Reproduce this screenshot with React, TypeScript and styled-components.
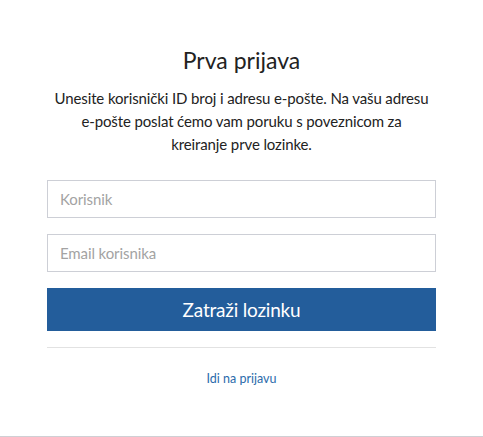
import React from "react";
import styled, { createGlobalStyle } from "styled-components";

const Global = createGlobalStyle`
  html, body { margin: 0; padding: 0; background: #fff; }
  body { font-family: Lato, "Noto Sans", sans-serif; color: #212529; }
  * { box-sizing: border-box; }
`;

const Page = styled.div`
  height: 437px;
  border-bottom: 1px solid #cfcfd4;
  display: flex;
  justify-content: center;
`;

const Card = styled.div`
  width: 389px;
  padding-top: 44px;
  display: flex;
  flex-direction: column;
`;

const Title = styled.h1`
  margin: 0;
  font-size: 23px;
  font-weight: 400;
  line-height: 32px;
  text-align: center;
  color: #222;
`;

const Intro = styled.p`
  margin: 11px -4px 0;
  font-size: 15px;
  letter-spacing: -0.12px;
  line-height: 23px;
  text-align: center;
  color: #222;
`;

const Input = styled.input<{ $mt: number }>`
  height: 38px;
  width: 100%;
  border: 1px solid #cdcfd6;
  padding: 0 12px;
  font-family: inherit;
  font-size: 15px;
  letter-spacing: -0.1px;
  color: #333;
  margin-top: ${(p) => p.$mt}px;
  outline: none;
  &::placeholder { color: #a3a3a3; }
`;

const Button = styled.button`
  margin-top: 16px;
  height: 43px;
  width: 100%;
  border: none;
  background: #235d9b;
  color: #fff;
  font-family: inherit;
  font-size: 19px;
  letter-spacing: -0.2px;
  cursor: pointer;
`;

const Divider = styled.hr`
  margin: 16px 0 0;
  border: none;
  border-top: 1px solid #e2e2e2;
`;

const Link = styled.a`
  margin-top: 23px;
  align-self: center;
  font-size: 12.5px;
  line-height: 16px;
  color: #2b6bab;
  text-decoration: none;
`;

export default function App() {
  return (
    <>
      <Global />
      <Page>
        <Card>
          <Title>Prva prijava</Title>
          <Intro>
            Unesite korisnički ID broj i adresu e-pošte. Na vašu adresu
            <br />
            e-pošte poslat ćemo vam poruku s poveznicom za
            <br />
            kreiranje prve lozinke.
          </Intro>
          <Input $mt={24} placeholder="Korisnik" />
          <Input $mt={16} placeholder="Email korisnika" />
          <Button>Zatraži lozinku</Button>
          <Divider />
          <Link href="#">Idi na prijavu</Link>
        </Card>
      </Page>
    </>
  );
}
